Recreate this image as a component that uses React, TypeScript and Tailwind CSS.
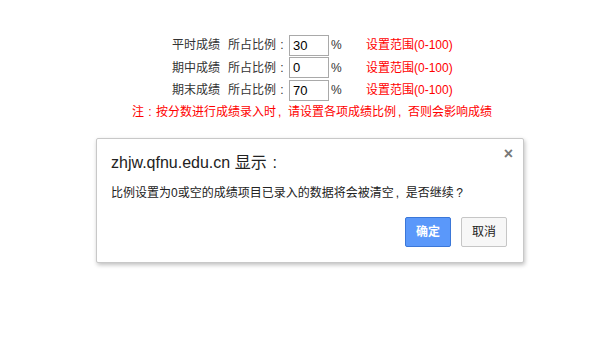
import React from "react";

const font = { fontFamily: '"Liberation Sans", "Noto Sans CJK SC", sans-serif' };

function Colon({ w = "w-[12px]" }: { w?: string }) {
  return <span className={`inline-block ${w} text-center`}>:</span>;
}
function Comma() {
  return <span className="inline-block w-[12px] text-left pl-[2px]">,</span>;
}

function Row({ label, value }: { label: string; value: string }) {
  return (
    <div className="flex items-center h-[22.5px] text-[12px] text-[#333]">
      <span className="w-[56px] text-left">{label}</span>
      <span className="w-[61px] whitespace-nowrap">
        所占比例
        <Colon />
      </span>
      <div className="w-[40px] h-[21px] border border-[#a9a9a9] bg-white flex items-center pl-[3px] text-[13px] text-black">
        {value}
      </div>
      <span className="ml-[2px] w-[35px]">%</span>
      <span className="text-[#ff0000]">设置范围(0-100)</span>
    </div>
  );
}

export default function App() {
  return (
    <div className="w-[609px] h-[345px] bg-white relative overflow-hidden" style={font}>
      <div className="pt-[34px] pl-[172px]">
        <Row label="平时成绩" value="30" />
        <Row label="期中成绩" value="0" />
        <Row label="期末成绩" value="70" />
      </div>
      <div className="pl-[132px] text-[12px] text-[#ff0000] leading-[18px] mt-[1px] whitespace-nowrap">
        注<Colon />按分数进行成绩录入时<Comma />请设置各项成绩比例<Comma />否则会影响成绩
      </div>
      <div className="absolute left-[96px] top-[138px] w-[428px] h-[125px] bg-white border border-[#c8c8c8] rounded-[2px] shadow-[1px_2px_4px_rgba(0,0,0,0.25)]">
        <div className="absolute right-[10px] top-[7px] text-[#777] text-[16px] font-bold leading-none">×</div>
        <div className="pl-[14px] pt-[13px] text-[16px] text-[#222] leading-[22px] whitespace-nowrap">
          zhjw.qfnu.edu.cn 显示<Colon w="w-[16px]" />
        </div>
        <div className="pl-[14px] pt-[10px] text-[12px] text-[#222] leading-[18px] whitespace-nowrap">
          比例设置为0或空的成绩项目已录入的数据将会被清空<Comma />是否继续
          <span className="inline-block w-[12px] text-center">?</span>
        </div>
        <div className="flex justify-end gap-[10px] pr-[16px] pt-[15px]">
          <div className="w-[46px] h-[30px] flex items-center justify-center bg-[#5a98fa] border border-[#3b77d8] rounded-[2px] text-white font-bold text-[12px]">
            确定
          </div>
          <div className="w-[46px] h-[30px] flex items-center justify-center bg-[#f7f7f7] border border-[#c6c6c6] rounded-[2px] text-[#222] text-[12px]">
            取消
          </div>
        </div>
      </div>
    </div>
  );
}
